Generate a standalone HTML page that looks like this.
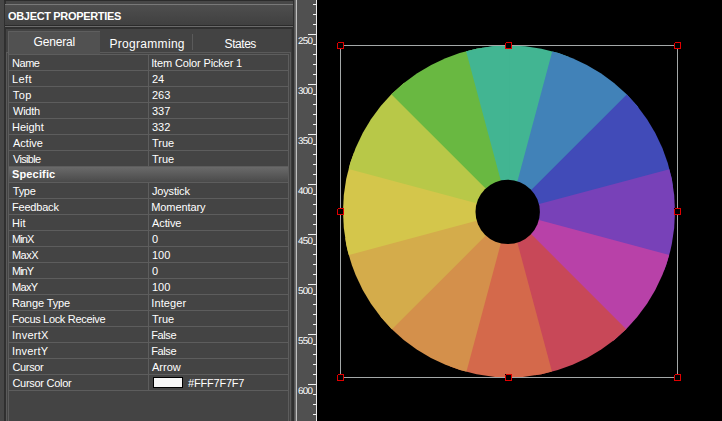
<!DOCTYPE html>
<html><head><meta charset="utf-8"><title>Object Properties</title>
<style>
*{margin:0;padding:0;box-sizing:border-box}
html,body{width:722px;height:421px;overflow:hidden;background:#000}
body{position:relative;font-family:"Liberation Sans",sans-serif;font-size:11px;color:#fff}
div{position:absolute}
#panel{left:0;top:0;width:297px;height:421px;background:#474747}
#vdark{left:4px;top:0;width:2px;height:421px;background:#2f2f2f}
#topdark{left:4px;top:0;width:289px;height:1px;background:#2b2b2b}
#hdr{left:5px;top:4px;width:288px;height:21px;background:linear-gradient(#4e4e4e,#404040);border-top:1px solid #787878}
#hdr span{position:absolute;left:3px;top:5px;font-weight:bold;font-size:11px;color:#fff;white-space:nowrap;letter-spacing:-0.33px}
#l25{left:5px;top:25px;width:288px;height:1px;background:#2b2b2b}
#l26{left:5px;top:26px;width:288px;height:1px;background:#6a6a6a}
#tabbg{left:5px;top:27px;width:288px;height:394px;background:#303030}
#tabin{left:6px;top:29px;width:286px;height:392px;background:#434343}
#tabpanel{left:6px;top:52px;width:285px;height:380px;background:#444;border:1px solid #5a5a5a}
#tab1{left:8px;top:31px;width:92px;height:23px;background:#515151;border-top:1px solid #5e5e5e;border-left:1px solid #606060}
.tl{top:37px;height:14px;line-height:14px;font-size:12px;white-space:nowrap;text-align:center;color:#fff}
.sep{top:34px;width:1px;height:16px;background:#5a5a5a}
#tbl{left:8px;top:54px;width:281px;height:380px;border:1px solid #5d5d5d;border-bottom:none;border-right:none;background:#444}
#tblr{left:288px;top:54px;width:1px;height:380px;background:#5d5d5d}
#r291{left:291px;top:29px;width:1px;height:392px;background:#3b3b3b}
.hl{left:9px;width:279px;height:1px;background:#5d5d5d}
.vd{left:148px;width:1px;height:15px;background:#5d5d5d}
.k,.v{height:15px;line-height:15px;white-space:nowrap;font-size:11px}
.k{left:12px}
.v{left:152px}
.hrow{left:9px;width:279px;height:15px;background:linear-gradient(#6a6a6a,#4a4a4a)}
.hrow span{position:absolute;left:3px;top:0px;letter-spacing:0.15px;line-height:15px;font-weight:bold;font-size:11px}
.sw{left:153px;width:30px;height:11px;background:#f7f7f7;border:1px solid #000}
#split1{left:293px;top:0;width:1px;height:421px;background:#2f2f2f}
#split2{left:294px;top:0;width:2px;height:421px;background:linear-gradient(90deg,#555 50%,#6c6c6c 50%)}
#split3{left:296px;top:0;width:1px;height:421px;background:#c0c0c0}
#ruler{left:297px;top:0;width:19px;height:421px;background:#505050}
#rulerw{left:316px;top:0;width:1px;height:421px;background:#e8e8e8}
.tk{height:1px;background:#f0f0f0}
.rl{left:298px;width:15px;height:10px;line-height:10px;font-size:9.8px;color:#fff;white-space:nowrap;letter-spacing:-0.7px;text-rendering:geometricPrecision}
svg{position:absolute;left:0;top:0}
</style></head><body>
<div id="panel"></div>
<div id="vdark"></div>
<div id="topdark"></div>
<div id="hdr"><span>OBJECT PROPERTIES</span></div>
<div id="l25"></div><div id="l26"></div>
<div id="tabbg"></div><div id="tabin"></div>
<div id="tabpanel"></div>
<div id="tab1"></div>
<div class="tl" style="left:33.6px;top:35px;letter-spacing:-0.2px">General</div>
<div class="tl" style="left:109.5px;letter-spacing:0.3px">Programming</div>
<div class="sep" style="left:192px"></div>
<div class="tl" style="left:224.6px;letter-spacing:-0.45px">States</div>
<div id="tbl"></div><div id="tblr"></div><div id="r291"></div>
<div class="k" style="top:56px;letter-spacing:-0.45px">Name</div>
<div class="v" style="top:56px;letter-spacing:-0.14px;margin-left:-0.8px">Item Color Picker 1</div>
<div class="vd" style="top:55px"></div>
<div class="hl" style="top:70px"></div>
<div class="k" style="top:72px;letter-spacing:0.40px">Left</div>
<div class="v" style="top:72px">24</div>
<div class="vd" style="top:71px"></div>
<div class="hl" style="top:86px"></div>
<div class="k" style="top:88px;letter-spacing:0.40px;margin-left:0.8px">Top</div>
<div class="v" style="top:88px">263</div>
<div class="vd" style="top:87px"></div>
<div class="hl" style="top:102px"></div>
<div class="k" style="top:104px;letter-spacing:-0.25px;margin-left:1.0px">Width</div>
<div class="v" style="top:104px">337</div>
<div class="vd" style="top:103px"></div>
<div class="hl" style="top:118px"></div>
<div class="k" style="top:120px">Height</div>
<div class="v" style="top:120px">332</div>
<div class="vd" style="top:119px"></div>
<div class="hl" style="top:134px"></div>
<div class="k" style="top:136px;margin-left:1.0px">Active</div>
<div class="v" style="top:136px">True</div>
<div class="vd" style="top:135px"></div>
<div class="hl" style="top:150px"></div>
<div class="k" style="top:152px;letter-spacing:-0.67px;margin-left:1.0px">Visible</div>
<div class="v" style="top:152px">True</div>
<div class="vd" style="top:151px"></div>
<div class="hl" style="top:166px"></div>
<div class="hrow" style="top:167px"><span>Specific</span></div>
<div class="hl" style="top:182px"></div>
<div class="k" style="top:184px;letter-spacing:-0.27px;margin-left:0.8px">Type</div>
<div class="v" style="top:184px;letter-spacing:-0.17px">Joystick</div>
<div class="vd" style="top:183px"></div>
<div class="hl" style="top:198px"></div>
<div class="k" style="top:200px;letter-spacing:-0.20px">Feedback</div>
<div class="v" style="top:200px;letter-spacing:-0.11px;margin-left:-0.7px">Momentary</div>
<div class="vd" style="top:199px"></div>
<div class="hl" style="top:214px"></div>
<div class="k" style="top:216px">Hit</div>
<div class="v" style="top:216px;letter-spacing:-0.10px">Active</div>
<div class="vd" style="top:215px"></div>
<div class="hl" style="top:230px"></div>
<div class="k" style="top:232px;letter-spacing:-0.90px">MinX</div>
<div class="v" style="top:232px">0</div>
<div class="vd" style="top:231px"></div>
<div class="hl" style="top:246px"></div>
<div class="k" style="top:248px;letter-spacing:-0.55px">MaxX</div>
<div class="v" style="top:248px">100</div>
<div class="vd" style="top:247px"></div>
<div class="hl" style="top:262px"></div>
<div class="k" style="top:264px;letter-spacing:-1.00px">MinY</div>
<div class="v" style="top:264px">0</div>
<div class="vd" style="top:263px"></div>
<div class="hl" style="top:278px"></div>
<div class="k" style="top:280px;letter-spacing:-0.65px">MaxY</div>
<div class="v" style="top:280px">100</div>
<div class="vd" style="top:279px"></div>
<div class="hl" style="top:294px"></div>
<div class="k" style="top:296px;letter-spacing:-0.10px">Range Type</div>
<div class="v" style="top:296px;letter-spacing:0.13px;margin-left:-0.8px">Integer</div>
<div class="vd" style="top:295px"></div>
<div class="hl" style="top:310px"></div>
<div class="k" style="top:312px;letter-spacing:-0.32px">Focus Lock Receive</div>
<div class="v" style="top:312px">True</div>
<div class="vd" style="top:311px"></div>
<div class="hl" style="top:326px"></div>
<div class="k" style="top:328px;letter-spacing:0.25px">InvertX</div>
<div class="v" style="top:328px;letter-spacing:-0.40px;margin-left:-0.8px">False</div>
<div class="vd" style="top:327px"></div>
<div class="hl" style="top:342px"></div>
<div class="k" style="top:344px;letter-spacing:0.20px">InvertY</div>
<div class="v" style="top:344px;letter-spacing:-0.40px;margin-left:-0.8px">False</div>
<div class="vd" style="top:343px"></div>
<div class="hl" style="top:358px"></div>
<div class="k" style="top:360px;letter-spacing:-0.33px;margin-left:0.4px">Cursor</div>
<div class="v" style="top:360px">Arrow</div>
<div class="vd" style="top:359px"></div>
<div class="hl" style="top:374px"></div>
<div class="k" style="top:376px;letter-spacing:-0.28px;margin-left:0.4px">Cursor Color</div>
<div class="sw" style="top:377px"></div>
<div class="v" style="top:376px;left:188px;letter-spacing:-0.20px">#FFF7F7F7</div>
<div class="vd" style="top:375px"></div>
<div class="hl" style="top:390px"></div>
<div id="split1"></div><div id="split2"></div><div id="split3"></div>
<div id="ruler"></div><div id="rulerw"></div>
<div class="tk" style="left:313px;top:4px;width:3px"></div>
<div class="tk" style="left:313px;top:14px;width:3px"></div>
<div class="tk" style="left:313px;top:24px;width:3px"></div>
<div class="tk" style="left:308px;top:34px;width:8px"></div>
<div class="rl" style="top:37px">250</div>
<div class="tk" style="left:313px;top:44px;width:3px"></div>
<div class="tk" style="left:313px;top:54px;width:3px"></div>
<div class="tk" style="left:313px;top:64px;width:3px"></div>
<div class="tk" style="left:313px;top:74px;width:3px"></div>
<div class="tk" style="left:308px;top:84px;width:8px"></div>
<div class="rl" style="top:87px">300</div>
<div class="tk" style="left:313px;top:94px;width:3px"></div>
<div class="tk" style="left:313px;top:104px;width:3px"></div>
<div class="tk" style="left:313px;top:114px;width:3px"></div>
<div class="tk" style="left:313px;top:124px;width:3px"></div>
<div class="tk" style="left:308px;top:134px;width:8px"></div>
<div class="rl" style="top:137px">350</div>
<div class="tk" style="left:313px;top:144px;width:3px"></div>
<div class="tk" style="left:313px;top:154px;width:3px"></div>
<div class="tk" style="left:313px;top:164px;width:3px"></div>
<div class="tk" style="left:313px;top:174px;width:3px"></div>
<div class="tk" style="left:308px;top:184px;width:8px"></div>
<div class="rl" style="top:187px">400</div>
<div class="tk" style="left:313px;top:194px;width:3px"></div>
<div class="tk" style="left:313px;top:204px;width:3px"></div>
<div class="tk" style="left:313px;top:214px;width:3px"></div>
<div class="tk" style="left:313px;top:224px;width:3px"></div>
<div class="tk" style="left:308px;top:234px;width:8px"></div>
<div class="rl" style="top:237px">450</div>
<div class="tk" style="left:313px;top:244px;width:3px"></div>
<div class="tk" style="left:313px;top:254px;width:3px"></div>
<div class="tk" style="left:313px;top:264px;width:3px"></div>
<div class="tk" style="left:313px;top:274px;width:3px"></div>
<div class="tk" style="left:308px;top:284px;width:8px"></div>
<div class="rl" style="top:287px">500</div>
<div class="tk" style="left:313px;top:294px;width:3px"></div>
<div class="tk" style="left:313px;top:304px;width:3px"></div>
<div class="tk" style="left:313px;top:314px;width:3px"></div>
<div class="tk" style="left:313px;top:324px;width:3px"></div>
<div class="tk" style="left:308px;top:334px;width:8px"></div>
<div class="rl" style="top:337px">550</div>
<div class="tk" style="left:313px;top:344px;width:3px"></div>
<div class="tk" style="left:313px;top:354px;width:3px"></div>
<div class="tk" style="left:313px;top:364px;width:3px"></div>
<div class="tk" style="left:313px;top:374px;width:3px"></div>
<div class="tk" style="left:308px;top:384px;width:8px"></div>
<div class="rl" style="top:387px">600</div>
<div class="tk" style="left:313px;top:394px;width:3px"></div>
<div class="tk" style="left:313px;top:404px;width:3px"></div>
<div class="tk" style="left:313px;top:414px;width:3px"></div>
<svg width="722" height="421" viewBox="0 0 722 421">
<defs><clipPath id="c"><circle cx="509.0" cy="211.5" r="166.0"/></clipPath></defs>
<g clip-path="url(#c)">
<polygon points="509.20,212.10 405.67,-174.27 532.23,-227.30 652.55,-161.33" fill="#42B592"/>
<polygon points="509.20,212.10 612.73,-174.27 748.84,-156.92 820.06,-39.63" fill="#4182B8"/>
<polygon points="509.20,212.10 792.04,-70.74 901.24,12.34 904.28,149.53" fill="#414BB8"/>
<polygon points="509.20,212.10 895.57,108.57 948.60,235.13 882.63,355.45" fill="#7841B8"/>
<polygon points="509.20,212.10 895.57,315.63 878.22,451.74 760.93,522.96" fill="#B841A8"/>
<polygon points="509.20,212.10 792.04,494.94 708.96,604.14 571.77,607.18" fill="#C84858"/>
<polygon points="509.20,212.10 612.73,598.47 486.17,651.50 365.85,585.53" fill="#D4694B"/>
<polygon points="509.20,212.10 405.67,598.47 269.56,581.12 198.34,463.83" fill="#D4904B"/>
<polygon points="509.20,212.10 226.36,494.94 117.16,411.86 114.12,274.67" fill="#D4AC4B"/>
<polygon points="509.20,212.10 122.83,315.63 69.80,189.07 135.77,68.75" fill="#D4C64B"/>
<polygon points="509.20,212.10 122.83,108.57 140.18,-27.54 257.47,-98.76" fill="#B8C848"/>
<polygon points="509.20,212.10 226.36,-70.74 309.44,-179.94 446.63,-182.98" fill="#69B841"/>
<polygon points="509.20,212.10 405.67,-174.27 451.77,-224.14 509.20,-187.90" fill="#42B592"/>
</g>
<circle cx="507.7" cy="211.9" r="32.2" fill="#000"/>
<rect x="340.5" y="45.5" width="337" height="332" fill="none" stroke="#a4a8a8" stroke-width="1"/>
<g fill="#000" stroke="#e00000" stroke-width="1">
<rect x="337.5" y="42.5" width="6" height="6"/><rect x="505.5" y="42.5" width="6" height="6"/><rect x="674.5" y="42.5" width="6" height="6"/>
<rect x="337.5" y="208.5" width="6" height="6"/><rect x="674.5" y="208.5" width="6" height="6"/>
<rect x="337.5" y="374.5" width="6" height="6"/><rect x="505.5" y="374.5" width="6" height="6"/><rect x="674.5" y="374.5" width="6" height="6"/>
</g>
<g fill="#000" shape-rendering="crispEdges"><rect x="337" y="42" width="1" height="1"/><rect x="505" y="42" width="1" height="1"/><rect x="674" y="42" width="1" height="1"/><rect x="337" y="208" width="1" height="1"/><rect x="674" y="208" width="1" height="1"/><rect x="337" y="374" width="1" height="1"/><rect x="505" y="374" width="1" height="1"/><rect x="674" y="374" width="1" height="1"/></g>
</svg>
</body></html>
